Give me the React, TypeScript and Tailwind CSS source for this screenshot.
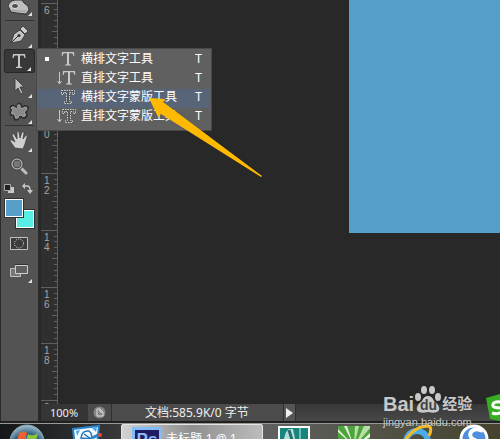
import type { ReactNode } from 'react';

const menuItems = [
  { label: '横排文字工具', mask: false, vertical: false, current: true },
  { label: '直排文字工具', mask: false, vertical: true, current: false },
  { label: '横排文字蒙版工具', mask: true, vertical: false, current: false },
  { label: '直排文字蒙版工具', mask: true, vertical: true, current: false },
];

const rulerMarks = [
  { label: '6', height: 'h-[57px]' },
  { label: '8', height: 'h-[57px]' },
  { label: '10', height: 'h-[56px]' },
  { label: '12', height: 'h-[57px]' },
  { label: '14', height: 'h-[57px]' },
  { label: '16', height: 'h-[56px]' },
  { label: '18', height: 'h-[57px]' },
  { label: '20', height: 'h-[57px]' },
];

function TypeGlyph({ mask, vertical }: { mask: boolean; vertical: boolean }) {
  return (
    <svg width="20" height="18" viewBox="0 0 20 18" fill="none" className="shrink-0">
      {vertical && <path d="M2.500 3v11M.5 12l2 3 2-3" stroke="#c4c4c4" />}
      <path
        transform={vertical ? 'translate(1 0)' : undefined}
        d={
          mask
            ? 'M4.500 2.500h13v4h-2v-2h-3v9h2v2h-7v-2h2v-9h-3v2h-2z'
            : 'M5 2h12l.3 4h-.8L15.500 3.200H12v11l2 .6v.7H8v-.7l2-.6v-11H6.500L5.500 6h-.8z'
        }
        fill={mask ? '#555' : '#cacaca'}
        stroke={mask ? '#d0d0d0' : 'none'}
        strokeDasharray={mask ? '1.500 1' : undefined}
      />
    </svg>
  );
}

function Tool({ label, height, flyout = true, active = false, children }: { label: string; height: string; flyout?: boolean; active?: boolean; children: ReactNode }) {
  return (
    <button aria-label={label} className={`relative flex w-[31px] items-center justify-center pr-[2px] ${height} ${active ? 'rounded-xs border border-[#282828] bg-[#383838]' : ''}`}>
      {children}
      {flyout && (
        <svg width="4" height="4" className="absolute right-[3px] bottom-px">
          <path d="M4 0v4H0z" fill="#e0e0e0" />
        </svg>
      )}
    </button>
  );
}

function Toolbar() {
  return (
    <aside className="flex w-[39px] shrink-0 flex-col items-center overflow-hidden border-x border-[#2c2c2c] bg-[#535353]">
      <Tool label="海绵工具" height="h-[17px]">
        <svg width="22" height="17" viewBox="0 0 22 17">
          <path d="M0 6Q1 1 7 0h7l2 3 4 3 1 4-3 4-9-1-6-1z" fill="#bdbdbd" stroke="#333" />
          <ellipse cx="7" cy="6" rx="3.500" ry="2.500" fill="#4d4d4d" stroke="#e0e0e0" />
          <path d="M4 10q6 2 14 1" fill="none" stroke="#999" />
        </svg>
      </Tool>
      <hr className="mt-[3px] w-[29px] border-[#333]" />
      <Tool label="钢笔工具" height="h-[28px]">
        <svg width="20" height="20" viewBox="0 0 20 20">
          <path d="M2 18 5 9l6-4 5 5-4 6z" fill="#c4c4c4" stroke="#333" strokeWidth=".8" />
          <path d="m11 4 3-3 5 5-3 3z" fill="#ccc" stroke="#333" strokeWidth=".8" />
          <path d="m3 17 6-6" stroke="#333" />
          <circle cx="10" cy="10.500" r="1.500" fill="#333" />
        </svg>
      </Tool>
      <Tool label="文字工具" height="h-[24px]" active>
        <svg width="14" height="16" viewBox="0 0 14 16">
          <path d="M1 1h12l.5 4h-1L11.500 2.500H8v11l2 .6v.9H4v-.9l2-.6v-11H2.500L1.500 5h-1z" fill="#c8c8c8" />
        </svg>
      </Tool>
      <Tool label="路径选择工具" height="h-[26px]">
        <svg width="14" height="20" viewBox="0 0 14 20">
          <path d="M3 2v13l3-3 3 6 2-1-3-6h4z" fill="#c0c0c0" stroke="#333" strokeWidth=".8" />
        </svg>
      </Tool>
      <Tool label="自定形状工具" height="h-[26px]">
        <svg width="20" height="20" viewBox="0 0 20 20">
          <path d="M9 2q4-1 3 3 2 1 4-1 3 0 3 3-1 2-3 3 3 2 1 5-4 2-5-1-2 0-3 3-4 2-4-2 1-3-3-2-2-3 1-5Q0 5 3 4q3-1 4 2 2-1 2-4z" fill="#888" stroke="#303030" strokeWidth="2" />
          <path d="M9 3q3-1 2 3 3 1 5-1 2 0 2 2-1 2-3 3 2 2 1 4-3 1-4-1-3 0-3 3-3 1-3-2 0-3-3-2-1-2 1-4Q1 6 3 5q3-1 4 2 2-1 2-4z" fill="#888" stroke="#b5b5b5" strokeWidth=".8" />
        </svg>
      </Tool>
      <hr className="w-[29px] border-[#333]" />
      <Tool label="抓手工具" height="h-[27px]">
        <svg width="20" height="20" viewBox="0 0 20 20">
          <path d="m6 18-5-7q0-2 2-1l3 2-3-7q0-2 2-1l3 5V2q1-2 2 0l1 6 2-6q2-1 2 1l-1 6 3-4q2 0 1 2l-2 7-2 5z" fill="#cfcfcf" stroke="#3a3a3a" strokeWidth=".7" />
        </svg>
      </Tool>
      <Tool label="缩放工具" height="h-[26px]" flyout={false}>
        <svg width="18" height="18" viewBox="0 0 18 18" fill="none">
          <path d="m11 11 5 5" stroke="#bebebe" strokeWidth="3" strokeLinecap="round" />
          <circle cx="7" cy="7" r="5" fill="#777" stroke="#333" strokeWidth="3" />
          <circle cx="7" cy="7" r="5" stroke="#aaa" strokeWidth="1.500" />
        </svg>
      </Tool>
      <div className="flex h-[18px] w-[31px] items-center justify-between pr-[2px]">
        <button aria-label="默认前景色和背景色">
          <svg width="10" height="11">
            <path d="M4 4h6v6H4z" fill="#c8c8c8" />
            <path d="M.5 1.500h6v6h-6z" fill="#222" stroke="#aaa" />
          </svg>
        </button>
        <button aria-label="切换前景色和背景色">
          <svg width="11" height="11" fill="none">
            <path d="M2 3h3q3 0 3 4v2" stroke="#c8c8c8" strokeWidth="1.300" />
            <path d="M3 0v6L0 3zM5 7h6l-3 4z" fill="#c8c8c8" />
          </svg>
        </button>
      </div>
      <div className="relative mt-px h-[31px] w-[31px]">
        <button aria-label="背景色" className="absolute right-0 bottom-0 size-[20px] border border-[#303030] bg-[#58eee6] ring-1 ring-white ring-inset" />
        <button aria-label="前景色" className="absolute top-0 left-0 size-[20px] border border-[#303030] bg-[#559fca] ring-1 ring-white ring-inset" />
      </div>
      <Tool label="快速蒙版" height="h-[28px]" flyout={false}>
        <svg width="18" height="15" fill="none">
          <path d="M.5 1.500h17v12H.5z" fill="#3b3b3b" stroke="#c0c0c0" />
          <circle cx="9" cy="7.500" r="4.500" stroke="#ddd" strokeDasharray="1 1.200" />
        </svg>
      </Tool>
      <Tool label="屏幕模式" height="h-[27px]">
        <svg width="18" height="16">
          <path d="M.5 5.500h10v8H.5z" fill="#777" stroke="#c0c0c0" />
          <path d="M5.500 2.500h12v8h-12z" fill="#606060" stroke="#d0d0d0" />
          <path d="M5 1.500h13" stroke="#333" />
        </svg>
      </Tool>
    </aside>
  );
}

function Ruler() {
  return (
    <div className="ml-[2px] w-[17px] shrink-0 overflow-hidden border-r border-[#606060] bg-[#2f2f2f] pt-[3px]">
      {rulerMarks.map((mark) => (
        <div key={mark.label} className={`relative ${mark.height}`}>
          <svg width="17" height="57" viewBox="0 0 17 57" shapeRendering="crispEdges" className="absolute inset-0">
            <path d="M0 .5h17M11 28.500h6" stroke="#606060" />
            <path d="M13 6.500h4M13 11.500h4M13 17.500h4M13 23.500h4M13 34.500h4M13 40.500h4M13 45.500h4M13 51.500h4" stroke="#606060" />
          </svg>
          <span className="relative block w-[6px] translate-x-[3px] pt-[3px] font-['Liberation_Sans'] text-[10px] leading-[10px] break-all text-[#a6a6a6]">{mark.label}</span>
        </div>
      ))}
    </div>
  );
}

function TypeMenu() {
  return (
    <div role="menu" className="absolute top-[48px] left-[36px] w-[176px] border border-[#494949] bg-[#606060] px-px pt-[2px] pb-[3px]">
      {menuItems.map((item, i) => (
        <button key={item.label} role="menuitem" className={`flex h-[19px] w-full items-center pr-[8px] pb-[3px] text-xs text-white ${i === 2 ? 'bg-[#586578]' : ''}`}>
          <span className={`mr-[8px] ml-[7px] size-[4px] ${item.current ? 'bg-white' : ''}`} />
          <TypeGlyph mask={item.mask} vertical={item.vertical} />
          <span className="ml-[4px] flex-1 text-left whitespace-nowrap">{item.label}</span>
          <span>T</span>
        </button>
      ))}
    </div>
  );
}

function StatusBar() {
  return (
    <footer className="ml-[2px] flex h-[17px] items-stretch bg-gradient-to-b from-[#383838] to-[#484848] text-xs leading-[17px] text-[#eee]">
      <span className="w-[47px] bg-[#353535] pl-[9px] text-[11px]">100%</span>
      <button aria-label="文档状态" className="flex w-[24px] items-center justify-center border-r border-[#303030] bg-[#4b4b4b]">
        <svg width="13" height="13" fill="none">
          <circle cx="6.500" cy="6.500" r="6" fill="#858585" />
          <path d="M4 3h3l3 3v4H4zM7 3v3h3" stroke="#ddd" />
        </svg>
      </button>
      <span className="w-[171px] bg-[#4b4b4b] pl-[33px] whitespace-nowrap">文档:585.9K/0 字节</span>
      <button aria-label="显示选项" className="flex w-[13px] items-center justify-center border-x border-[#303030] bg-[#555]">
        <svg width="7" height="10">
          <path d="M0 0v10l7-5z" fill="#eee" />
        </svg>
      </button>
    </footer>
  );
}

function Taskbar() {
  return (
    <nav className="flex h-[16px] shrink-0 items-start overflow-hidden border-t border-[#9a9a92] bg-linear-to-r from-[#161719] via-[#626264] to-[#45432d]">
      <button aria-label="开始" className="ml-[9px] shrink-0">
        <svg width="36" height="36" viewBox="0 0 36 36">
          <defs>
            <radialGradient id="orb" cx=".5" cy=".7" r=".7">
              <stop offset="0" stopColor="#58b8e8" />
              <stop offset=".6" stopColor="#285978" />
              <stop offset="1" stopColor="#a4c3d3" />
            </radialGradient>
          </defs>
          <circle cx="18" cy="18" r="17" fill="url(#orb)" stroke="#8ca8b8" />
          <path d="M10 9q5-3 8 0l-2 8q-4-3-8 0z" fill="#ed6031" />
          <path d="M19 10q5 3 10-1l-2 8q-5 4-10 0z" fill="#8ac33f" />
        </svg>
      </button>
      <button aria-label="截图" className="ml-[27px] shrink-0">
        <svg width="31" height="26" viewBox="0 0 31 26" fill="none">
          <path d="m1 5 26-3-2 18-22 3z" fill="#f3faff" stroke="#2684cc" strokeWidth="2" />
          <path d="m4 7 4-1-3 6zM20 4l4 4 1-5z" fill="#4aa7e6" />
          <path d="M9 14q1-8 8-7 4 3 2 8zM12 10l7 5" stroke="#2072bd" strokeWidth="1.500" />
          <path d="m20 14 8-4" stroke="#2684cc" strokeWidth="3" />
          <circle cx="28" cy="11" r="2" fill="#e14b33" />
        </svg>
      </button>
      <button className="ml-[18px] flex h-[30px] w-[142px] shrink-0 items-start rounded-xs border border-[#e4e4e4] bg-linear-to-r from-[#d2d2d2] via-[#909090] to-[#bcbcbc] pt-[2px] pl-[10px]">
        <span className="h-[28px] w-[30px] border-3 border-[#83bdf7] bg-[#201b63] font-['Liberation_Sans'] text-[17px] leading-[19px] font-bold text-[#86baf2]">Ps</span>
        <span className="ml-[4px] pt-[4px] text-xs whitespace-nowrap text-white">未标题-1 @ 1...</span>
      </button>
      <button aria-label="三维设计" className="mt-[2px] ml-[15px] shrink-0">
        <svg width="32" height="24">
          <path d="M1 1h30v24H1z" fill="#17847e" stroke="#fff" strokeWidth="2" />
          <path d="M22 1v24" stroke="#c9f2ec" />
          <path d="m3 22 5-16 3-3h4l4 19z" fill="#b4ddd8" />
          <path d="m11 4 3 10" stroke="#246e6b" strokeWidth="3" />
        </svg>
      </button>
      <button aria-label="绘图" className="mt-[2px] ml-[28px] shrink-0">
        <svg width="32" height="24">
          <path d="M0 0h32v24H0z" fill="#4da43d" />
          <path d="M16 20 17 0h4zM17 20 26 0h6v2z" fill="#b8dfa6" />
          <path d="M16 20 0 3v3zM15 18 6 0h3zM18 20 32 7v4z" fill="#e4f3da" />
        </svg>
      </button>
      <button aria-label="浏览器" className="ml-[31px] shrink-0">
        <svg width="34" height="28" fill="none">
          <circle cx="16" cy="18" r="11" stroke="#47adea" strokeWidth="6" />
          <path d="M2 20Q12 2 27 2q5 1 1 10" stroke="#f3ba28" strokeWidth="3" />
        </svg>
      </button>
      <button aria-label="搜狗浏览器" className="ml-[24px] shrink-0">
        <svg width="30" height="30" fill="none">
          <circle cx="15" cy="15" r="13" fill="#4f8fde" stroke="#fff" strokeWidth="3" />
          <path d="M24 7Q16 3 12 8q-3 6 6 9" stroke="#fff" strokeWidth="4" />
        </svg>
      </button>
    </nav>
  );
}

function Watermark() {
  return (
    <div className="absolute right-[29px] bottom-[9px] w-[88px] text-[#c8c8c8]">
      <div className="flex items-end font-['Liberation_Sans'] font-bold">
        <span className="text-[20px] leading-[20px]">Bai</span>
        <svg width="28" height="29" viewBox="0 0 28 29" fill="currentColor" className="shrink-0">
          <ellipse cx="4" cy="12" rx="3" ry="4" />
          <ellipse cx="10" cy="5" rx="3" ry="4" />
          <ellipse cx="18" cy="5" rx="3" ry="4" />
          <ellipse cx="24" cy="12" rx="3" ry="4" />
          <path d="M14 11q4 0 6 5 6 4 5 9-2 4-11 2-9 2-11-2-1-5 5-9 2-5 6-5z" />
          <text x="6" y="25" fontSize="14" fill="#444">du</text>
        </svg>
        <span className="font-['Noto_Sans_CJK_SC'] text-[15px] leading-[22px] whitespace-nowrap">经验</span>
      </div>
      <p className="font-['Liberation_Sans'] text-[11px] leading-[16px]">jingyan.baidu.com</p>
    </div>
  );
}

export default function App() {
  return (
    <div className="relative flex h-screen flex-col overflow-hidden bg-[#282828] font-['Noto_Sans','Noto_Sans_CJK_SC',sans-serif]">
      <div className="flex min-h-0 flex-1 border-b-2 border-[#202020]">
        <Toolbar />
        <div className="flex min-w-0 flex-1 flex-col">
          <main className="flex min-h-0 flex-1">
            <Ruler />
            <div className="ml-[291px] h-[233px] flex-1 bg-[#559fca]" />
          </main>
          <StatusBar />
        </div>
      </div>
      <Taskbar />
      <TypeMenu />
      <svg width="114" height="82" className="absolute top-[96px] left-[149px]">
        <path d="M0 2 16 3l-2 3 99 74-1 1L12 18l-3 3z" fill="#ffb900" />
      </svg>
      <Watermark />
      <svg width="14" height="27" viewBox="0 0 14 27" className="absolute right-0 bottom-[18px]">
        <path d="M0 4 14 0v27L4 25z" fill="#39ad22" />
        <path d="M15 8Q6 7 7 12q1 2 8 2M6 19q6 2 9-1" fill="none" stroke="#fff" strokeWidth="3" />
      </svg>
    </div>
  );
}
